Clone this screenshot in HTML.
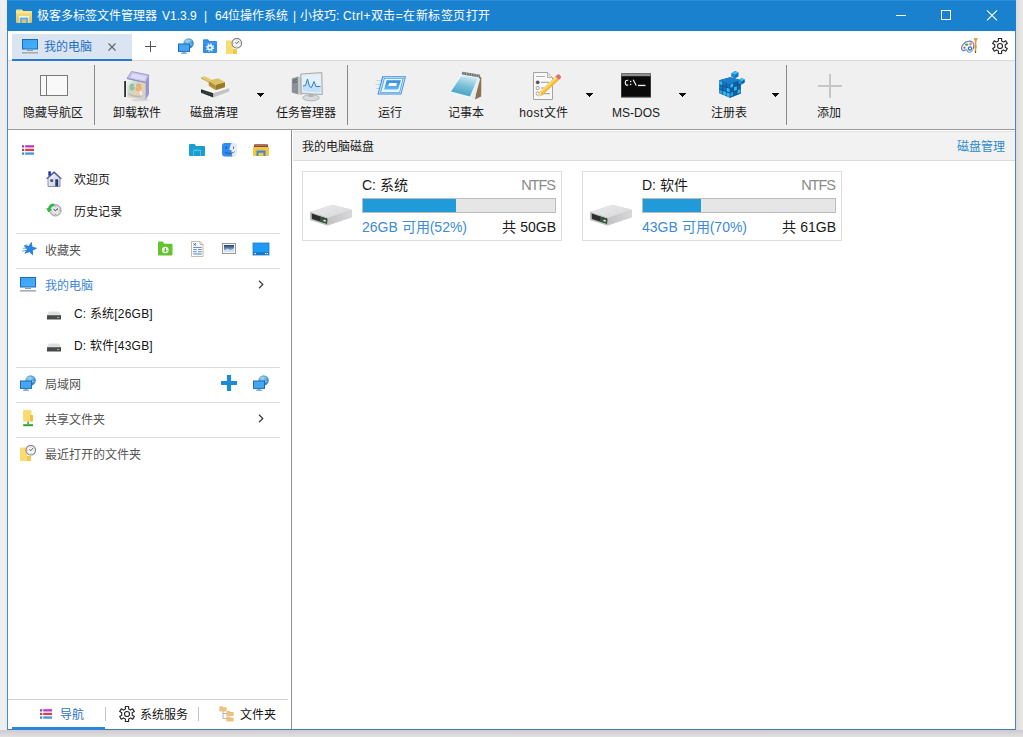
<!DOCTYPE html>
<html lang="zh-CN">
<head>
<meta charset="utf-8">
<title>极客多标签文件管理器</title>
<style>
*{box-sizing:border-box;margin:0;padding:0}
html,body{width:1023px;height:737px;overflow:hidden}
body{position:relative;background:#e9e9ec;font-family:"Liberation Sans",sans-serif;font-size:12px;color:#141414}
.abs{position:absolute}
#shL{left:0;top:0;width:7px;height:737px;background:linear-gradient(90deg,#e8edf6,#f5efec 50%,#e6edf8)}
#shR{left:1016px;top:0;width:7px;height:737px;background:linear-gradient(90deg,#dcdcde,#ece8e6)}
#shB{left:0;top:730px;width:1023px;height:7px;background:linear-gradient(180deg,#c6cad8,#dcd2d6 45%,#dde1de)}
#win{left:7px;top:0;width:1009px;height:730px;background:#fff;border-left:1px solid #4b8ad0;border-right:1px solid #4b86c2;border-bottom:1px solid #4a7ca6}
#title{left:7px;top:0;width:1009px;height:31px;background:#1a81ce;border-top:1px solid #2a8cd8;color:#fff}
#title span{position:absolute;top:0;height:31px;line-height:31px;white-space:nowrap;font-size:12px}
#tabrow{left:8px;top:31px;width:1007px;height:29px;background:#fff}
#tabline{left:8px;top:60px;width:1007px;height:1px;background:#dadada}
#tab{left:12px;top:34px;width:120px;height:25px;background:#dbe4f1}
#tabul{left:12px;top:59px;width:120px;height:2px;background:#2b78cc}
#tabtxt{left:44px;top:35px;height:24px;line-height:24px;color:#1c6fc4;white-space:nowrap}
#tool{left:8px;top:61px;width:1007px;height:68px;background:#f0f0f0}
#toolline{left:8px;top:129px;width:1007px;height:1px;background:#9a9a9a}
.tsep{position:absolute;top:65px;width:1px;height:60px;background:#8a8a8a}
.tlab{position:absolute;top:105px;height:16px;line-height:16px;width:80px;margin-left:-40px;text-align:center;white-space:nowrap;color:#1a1a1a}
.dd{position:absolute;top:93px;width:7px;height:4px}
#split{left:291px;top:130px;width:1px;height:599px;background:#909090}
#rhead{left:293px;top:131px;width:722px;height:29px;background:#f2f2f2;border-top:1px solid #e3e3e3}
#rheadline{left:293px;top:160px;width:722px;height:1px;background:#dcdcdc}
.hl{position:absolute;left:16px;width:264px;height:1px;background:#dcdcdc}
.nt{position:absolute;height:20px;line-height:20px;white-space:nowrap;margin-top:1px}
.g{color:#555}
.b{color:#3a86d8}
.card{position:absolute;top:171px;width:260px;height:70px;border:1px solid #dedede;background:#fff;font-size:14px}
.card .nm{position:absolute;left:59px;top:3px;height:20px;line-height:20px;white-space:nowrap;color:#1a1a1a}
.card .fs{position:absolute;right:6px;top:3px;height:20px;line-height:20px;color:#8a8a8a;font-size:14.5px;letter-spacing:-1px}
.card .bar{position:absolute;left:59px;top:26px;width:194px;height:15px;border:1px solid #bcbcbc;background:#e6e6e6}
.card .bar i{display:block;height:13px;background:#219ad9}
.card .fr{position:absolute;left:59px;top:45px;height:20px;line-height:20px;white-space:nowrap;color:#3d8bd6}
.card .tt{position:absolute;right:5px;top:45px;height:20px;line-height:20px;white-space:nowrap;color:#1a1a1a}
#btline{left:8px;top:699px;width:280px;height:1px;background:#cfcfcf}
#btul{left:12px;top:727px;width:93px;height:3px;background:#2b86d8}
.bsep{position:absolute;top:707px;width:1px;height:14px;background:#c4c4c4}
svg{position:absolute;overflow:visible}
</style>
</head>
<body>
<div class="abs" id="shL"></div><div class="abs" id="shR"></div><div class="abs" id="shB"></div>
<div class="abs" id="win"></div>

<!-- TITLE BAR -->
<div class="abs" id="title">
<span style="left:30px">极客多标签文件管理器</span>
<span style="left:155px">V1.3.9</span>
<span style="left:197px">|</span>
<span style="left:208px">64位操作系统</span>
<span style="left:286px">|</span>
<span style="left:293px">小技巧:</span>
<span style="left:336px;letter-spacing:.45px">Ctrl+双击=在新标签页打开</span>
</div>

<!-- TAB ROW -->
<div class="abs" id="tabrow"></div>
<div class="abs" id="tabline"></div>
<div class="abs" id="tab"></div>
<div class="abs" id="tabul"></div>
<div class="abs" id="tabtxt">我的电脑</div>

<!-- TOOLBAR -->
<div class="abs" id="tool"></div>
<div class="abs" id="toolline"></div>
<div class="tsep" style="left:94px"></div>
<div class="tsep" style="left:347px"></div>
<div class="tsep" style="left:786px"></div>
<div class="tlab" style="left:53px">隐藏导航区</div>
<div class="tlab" style="left:137px">卸载软件</div>
<div class="tlab" style="left:214px">磁盘清理</div>
<div class="tlab" style="left:306px">任务管理器</div>
<div class="tlab" style="left:390px">运行</div>
<div class="tlab" style="left:466px">记事本</div>
<div class="tlab" style="left:544px;letter-spacing:.5px">host文件</div>
<div class="tlab" style="left:636px">MS-DOS</div>
<div class="tlab" style="left:729px">注册表</div>
<div class="tlab" style="left:829px">添加</div>
<svg class="dd" style="left:257px" width="7" height="4" viewBox="0 0 7 4" shape-rendering="crispEdges"><path d="M0 0h7v1h-1v1h-1v1h-1v1h-1v-1h-1v-1h-1v-1h-1z" fill="#0c0c0c"/></svg>
<svg class="dd" style="left:586px" width="7" height="4" viewBox="0 0 7 4" shape-rendering="crispEdges"><path d="M0 0h7v1h-1v1h-1v1h-1v1h-1v-1h-1v-1h-1v-1h-1z" fill="#0c0c0c"/></svg>
<svg class="dd" style="left:679px" width="7" height="4" viewBox="0 0 7 4" shape-rendering="crispEdges"><path d="M0 0h7v1h-1v1h-1v1h-1v1h-1v-1h-1v-1h-1v-1h-1z" fill="#0c0c0c"/></svg>
<svg class="dd" style="left:772px" width="7" height="4" viewBox="0 0 7 4" shape-rendering="crispEdges"><path d="M0 0h7v1h-1v1h-1v1h-1v1h-1v-1h-1v-1h-1v-1h-1z" fill="#0c0c0c"/></svg>

<!-- PANELS -->
<div class="abs" id="split"></div>
<div class="abs" id="rhead"></div>
<div class="abs" id="rheadline"></div>
<div class="nt" style="left:302px;top:136px;color:#1a1a1a">我的电脑磁盘</div>
<div class="nt" style="left:957px;top:136px;color:#2d8bc9">磁盘管理</div>

<!-- LEFT NAV -->
<div class="nt" style="left:74px;top:169px">欢迎页</div>
<div class="nt" style="left:74px;top:201px">历史记录</div>
<div class="hl" style="top:233px"></div>
<div class="nt g" style="left:45px;top:240px">收藏夹</div>
<div class="hl" style="top:268px"></div>
<div class="nt b" style="left:45px;top:275px">我的电脑</div>
<div class="nt" style="left:74px;top:303px"><span style="letter-spacing:.2px">C: 系统[26GB]</span></div>
<div class="nt" style="left:74px;top:335px"><span style="letter-spacing:.2px">D: 软件[43GB]</span></div>
<div class="hl" style="top:367px"></div>
<div class="nt g" style="left:45px;top:374px">局域网</div>
<div class="hl" style="top:402px"></div>
<div class="nt g" style="left:45px;top:409px">共享文件夹</div>
<div class="hl" style="top:437px"></div>
<div class="nt g" style="left:45px;top:444px">最近打开的文件夹</div>

<!-- DRIVE CARDS -->
<div class="card" style="left:302px">
<div class="nm">C: 系统</div><div class="fs">NTFS</div>
<div class="bar"><i style="width:93px"></i></div>
<div class="fr">26GB 可用(52%)</div><div class="tt">共 50GB</div>
</div>
<div class="card" style="left:582px">
<div class="nm">D: 软件</div><div class="fs">NTFS</div>
<div class="bar"><i style="width:58px"></i></div>
<div class="fr">43GB 可用(70%)</div><div class="tt">共 61GB</div>
</div>

<!-- BOTTOM TABS -->
<div class="abs" id="btline"></div>
<div class="abs" id="btul"></div>
<div class="bsep" style="left:105px"></div>
<div class="bsep" style="left:198px"></div>
<div class="nt" style="left:60px;top:704px;color:#2b6fc2">导航</div>
<div class="nt" style="left:140px;top:704px">系统服务</div>
<div class="nt" style="left:240px;top:704px">文件夹</div>

<!-- ICONS -->
<svg width="0" height="0" style="left:0;top:0">
<defs>
<linearGradient id="gFold" x1="0" y1="0" x2="0" y2="1"><stop offset="0" stop-color="#f8e48e"/><stop offset="1" stop-color="#ecc044"/></linearGradient>
<linearGradient id="gScr" x1="0" y1="0" x2="1" y2="1"><stop offset="0" stop-color="#3aa2f4"/><stop offset="1" stop-color="#49b0fb"/></linearGradient>
<radialGradient id="gGlobe" cx="0.4" cy="0.35" r="0.7"><stop offset="0" stop-color="#9ad4f4"/><stop offset="1" stop-color="#2276b4"/></radialGradient>
<linearGradient id="gDrvTop" x1="0" y1="0" x2="1" y2="1"><stop offset="0" stop-color="#ececee"/><stop offset="1" stop-color="#d6d6d8"/></linearGradient><linearGradient id="gDrvSide" x1="0" y1="0" x2="1" y2="0"><stop offset="0" stop-color="#c2c2c4"/><stop offset="1" stop-color="#d8d8da"/></linearGradient>
<linearGradient id="gNote" x1="0" y1="0" x2="1" y2="1"><stop offset="0" stop-color="#9fd4e6"/><stop offset="0.5" stop-color="#4aa3c4"/><stop offset="1" stop-color="#8fcfe4"/></linearGradient>
<linearGradient id="gBox" x1="0" y1="0" x2="1" y2="1"><stop offset="0" stop-color="#fafafa"/><stop offset="0.35" stop-color="#c4dcc8"/><stop offset="0.6" stop-color="#ecd0b0"/><stop offset="1" stop-color="#c8d0e0"/></linearGradient>
<linearGradient id="gGold" x1="0" y1="0" x2="0" y2="1"><stop offset="0" stop-color="#d4b858"/><stop offset="1" stop-color="#987826"/></linearGradient>
<linearGradient id="gCube" x1="0" y1="0" x2="0" y2="1"><stop offset="0" stop-color="#3fb4ee"/><stop offset="1" stop-color="#1579c2"/></linearGradient>
<filter id="soft" x="-10%" y="-10%" width="120%" height="120%"><feGaussianBlur stdDeviation="0.35"/></filter>

<symbol id="iMon" viewBox="0 0 16 15"><rect x="0.5" y="0.5" width="15" height="9.5" fill="url(#gScr)" stroke="#1b6cb6"/><rect x="5" y="11" width="6" height="1" fill="#8f9ba8"/><rect x="0" y="13" width="16" height="1.6" fill="#a3adb8"/></symbol>
<symbol id="iNet" viewBox="0 0 16 16"><circle cx="10.6" cy="5.4" r="5.2" fill="url(#gGlobe)"/><path d="M7 3.5c2-1 4-1.5 6.5-.5M6.5 7c3-1 5.500-1 9 .2" stroke="#bfe4f8" stroke-width=".7" fill="none" opacity=".7"/><rect x="0.5" y="6" width="11" height="7.400" fill="#46a6f2" stroke="#1c6db8"/><rect x="4.500" y="13.800" width="3" height="1" fill="#5a92c6"/><rect x="3" y="14.800" width="6" height="1" fill="#6aa0d0"/></symbol>
<symbol id="iNoteClk" viewBox="0 0 16 16"><path d="M0 2.500h7v8.500h3.800v5H0z" fill="#f8dc70"/><path d="M7 11h3.800v5H7z" fill="#efc84c"/><circle cx="10.800" cy="5.200" r="4.800" fill="#f6f6f8" stroke="#85858c" stroke-width="1.100"/><path d="M10.800 1.600v1M10.800 7.800v1M7.200 5.200h1M13.400 5.200h1" stroke="#9a9aa0" stroke-width=".7"/><path d="M9.300 4.300l1.500 1.400 2.100-2.600" stroke="#4a4a50" stroke-width=".9" fill="none"/></symbol>
<symbol id="iList" viewBox="0 0 12 10"><rect x="0" y="0.200" width="2.200" height="2.300" fill="#8a46b8"/><rect x="3.200" y="0.200" width="8.800" height="2.300" fill="#b53cc2"/><rect x="0" y="3.800" width="2.200" height="2.300" fill="#b8474a"/><rect x="3.200" y="3.800" width="8.800" height="2.300" fill="#d6404c"/><rect x="0" y="7.400" width="2.200" height="2.300" fill="#3c86c8"/><rect x="3.200" y="7.400" width="8.800" height="2.300" fill="#3e97dc"/></symbol>
<symbol id="iGear" viewBox="0 0 16 16"><path d="M6.42 2.94 L6.40 0.47 L9.60 0.47 L9.58 2.94 A5.30 5.30 0 0 1 11.59 4.10 L13.72 2.85 L15.32 5.62 L13.17 6.84 A5.30 5.30 0 0 1 13.17 9.16 L15.32 10.38 L13.72 13.15 L11.59 11.90 A5.30 5.30 0 0 1 9.58 13.06 L9.60 15.53 L6.40 15.53 L6.42 13.06 A5.30 5.30 0 0 1 4.41 11.90 L2.28 13.15 L0.68 10.38 L2.83 9.16 A5.30 5.30 0 0 1 2.83 6.84 L0.68 5.62 L2.28 2.85 L4.41 4.10 A5.30 5.30 0 0 1 6.42 2.94 Z" fill="none" stroke="#2a2a2a" stroke-width="1.150" stroke-linejoin="round"/><circle cx="8" cy="8" r="2.500" fill="none" stroke="#2a2a2a" stroke-width="1.150"/></symbol>
<symbol id="iDrvS" viewBox="0 0 14 9"><path d="M2 0.500h10l2 3.500H0z" fill="#dedfe0"/><rect x="0" y="4" width="14" height="4.600" rx=".6" fill="#45494b"/><rect x="0" y="4" width="14" height="1" fill="#6a6e70"/><rect x="10.300" y="6" width="2" height="1" fill="#7fd05a"/></symbol>
<symbol id="iDrvL" viewBox="0 0 43 22"><path d="M0 7.900 L22.500 0.800 L41.600 5.700 L41.900 13.300 L17.500 21.600 L0.300 16.100Z" fill="#c9c9cb"/><path d="M0 7.900 L22.500 0.800 L41.600 5.700 L18.100 13.900Z" fill="url(#gDrvTop)"/><path d="M18.100 13.900 L41.600 5.700 L41.900 13.300 L17.500 21.600Z" fill="url(#gDrvSide)"/><path d="M0 7.900 L18.100 13.900 L17.500 21.600 L0.300 16.100Z" fill="#bcbcbe"/><path d="M1.700 9.600 L17.300 14.800 L17 19.800 L1.900 15.100Z" fill="#2c2d2f"/><path d="M10 12.400 L17.300 14.800 L17 19.800 L10 17.600Z" fill="#35553a"/><ellipse cx="14.700" cy="16.700" rx="1.500" ry=".8" fill="#e4f4e0" transform="rotate(17 14.700 16.700)"/></symbol>
<symbol id="iChev" viewBox="0 0 6 9"><path d="M1 0.700 L4.800 4.500 L1 8.300" fill="none" stroke="#444" stroke-width="1.300"/></symbol>
</defs>
</svg>

<!-- title icon -->
<svg style="left:16px;top:9px" width="16" height="14" viewBox="0 0 16 14"><path d="M0 1.500q0-1 1-1h5l1.200 1.500H15q1 0 1 1V13q0 1-1 1H1q-1 0-1-1z" fill="url(#gFold)"/><rect x="0" y="2.600" width="16" height="1.200" fill="#fbeeb0" opacity=".8"/><path d="M3 7h10v7H3z" fill="#e9f3fb"/><path d="M3.800 8.600h8.400V14H3.800z" fill="#5fb0ea"/><path d="M6 10.500h4V14H6z" fill="#e6c652"/></svg>
<!-- window controls -->
<svg style="left:896px;top:10px" width="102" height="11" viewBox="0 0 102 11"><path d="M0 5.500h10" stroke="#fff" stroke-width="1"/><rect x="45.500" y="0.500" width="9" height="9" fill="none" stroke="#fff" stroke-width="1"/><path d="M91 0.300 L101 10.300 M101 0.300 L91 10.300" stroke="#fff" stroke-width="1.100"/></svg>

<!-- tab icons -->
<svg style="left:22px;top:39px" width="16" height="15"><use href="#iMon"/></svg>
<svg style="left:108px;top:43px" width="8" height="8" viewBox="0 0 8 8"><path d="M0.500 0.500 L7.500 7.500 M7.500 0.500 L0.500 7.500" stroke="#666" stroke-width="1.200"/></svg>
<svg style="left:145px;top:41px" width="11" height="11" viewBox="0 0 11 11"><path d="M5.500 0v11M0 5.500h11" stroke="#555" stroke-width="1"/></svg>
<svg style="left:178px;top:38px" width="16" height="16"><use href="#iNet"/></svg>
<svg style="left:203px;top:39px" width="14" height="14" viewBox="0 0 14 14"><path d="M0 1.200q0-1 1-1h4l1.300 1.800H13q1 0 1 1V13q0 1-1 1H1q-1 0-1-1z" fill="#2f8cec"/><path d="M0 3.500h14v1H0z" fill="#5aa8f4" opacity=".6"/><circle cx="7" cy="8.600" r="3" fill="#eaf4fe"/><circle cx="7" cy="8.600" r="3.600" fill="none" stroke="#eaf4fe" stroke-width="1.300" stroke-dasharray="1.400 1.420"/><circle cx="7" cy="8.600" r="1.200" fill="#2f8cec"/></svg>
<svg style="left:226px;top:38px" width="16" height="16"><use href="#iNoteClk"/></svg>
<!-- palette -->
<svg style="left:961px;top:37px" width="18" height="17" viewBox="0 0 18 17"><path d="M7.500 4.200c3.600-.4 5.600 1.500 5.400 4.600-.2 3.300-2.400 6.600-4.900 6.400-1.800-.2-1.400-2.300-2.600-2.500-1.600-.2-2.800 2-4 .6C.3 11.800.5 9 2.500 6.800 3.800 5.300 5.500 4.400 7.500 4.200z" fill="#eef6fd" stroke="#5a7ab8" stroke-width="1.100"/><path d="M8 10.500c2 .2 3.500 1 4 2.200-.8 1.600-2.500 2.700-4 2.500-1.500-.3-1.200-2-2-2.500.5-1 1-2 2-2.200z" fill="#bfe6f8" opacity=".8"/><ellipse cx="5.600" cy="7.600" rx="1.700" ry="1.200" fill="#46b046"/><ellipse cx="9.500" cy="7" rx="1.300" ry="1.400" fill="#e0905a"/><ellipse cx="3.400" cy="10.800" rx="1.100" ry="1" fill="#c0504a"/><circle cx="9" cy="11.500" r="1.600" fill="#fff" stroke="#3a68b4" stroke-width="1.100"/><path d="M12.800 1.200h4l-1.300 2.600-.2 3.200q1.100 2.800-.1 5.600l-.2 3.200h-1l-.2-3.200q-1-2.800.1-5.600l-.2-3.200z" fill="#e49a30"/><path d="M12.800 1.200h4l-1.300 2.800h-1.400z" fill="#dc9a64"/><rect x="13.900" y="14" width="1.200" height="1.900" fill="#7a4a20"/></svg>
<svg style="left:992px;top:38px" width="16" height="16"><use href="#iGear"/></svg>
<!-- TOOLBAR ICONS -->
<!-- hide nav -->
<svg style="left:40px;top:75px" width="28" height="21" viewBox="0 0 28 21"><rect x="0.500" y="0.500" width="27" height="20" fill="#f9f9f9" stroke="#7a7a7a"/><path d="M6.500 0.500v20" stroke="#7a7a7a"/></svg>
<!-- uninstall software box -->
<svg style="left:123px;top:70px" width="28" height="32" viewBox="0 0 28 32"><g filter="url(#soft)"><ellipse cx="17" cy="30" rx="9" ry="1.500" fill="#d0d0d0" opacity=".7"/><rect x="1.200" y="11" width="1.800" height="16" fill="#2d2d33"/><path d="M4 8.500 L22.500 12.500 L22.500 30.200 L4.500 27Z" fill="url(#gBox)"/><path d="M22.500 12.500 L26 5 L26 24 L22.500 30.200Z" fill="#9a96c8"/><path d="M4 8.500 L8.500 1.500 L26 5 L22.500 12.500Z" fill="#c6c2ee" stroke="#9490cc" stroke-width=".8"/><path d="M7.500 7.600 L9.800 3.600 L23.300 6.300 L21.300 10.400Z" fill="#dddbf8"/><path d="M4 8.500 L22.500 12.500" stroke="#8c88c4" stroke-width=".9"/><path d="M8 18c3-3 6-2 8 1s2 5 3 8" stroke="#fff" stroke-width="2" fill="none" opacity=".7"/><ellipse cx="15.500" cy="17.500" rx="3" ry="4" fill="#e6a868" opacity=".8"/><ellipse cx="9" cy="17" rx="2.600" ry="3.500" fill="#86b894" opacity=".8"/><path d="M6 24c3 2 8 3 14 2" stroke="#9ab0c8" stroke-width="1.500" fill="none" opacity=".7"/></g></svg>
<!-- disk cleanup -->
<svg style="left:199px;top:74px" width="32" height="25" viewBox="0 0 32 25"><g filter="url(#soft)"><path d="M2 15.200 L16 10 L30.200 14 L14.400 19.300Z" fill="#f6f6f6"/><path d="M2 15.200 L14.400 19.300 L14.400 23.400 L2 18.700Z" fill="#26282a"/><path d="M3.200 16.700 L13.200 20 L13.200 21.700 L3.200 18.200Z" fill="#324c38"/><path d="M14.400 19.300 L30.200 14 L30.200 17.600 L14.400 23.400Z" fill="#c2c4c6"/><path d="M9.700 6.500 L16.500 10.800 L16.500 16.200 L9.700 11.700Z" fill="#b89a3e"/><path d="M16.500 10.800 L26 8 L26 13.300 L16.500 16.200Z" fill="#9c7c2a"/><path d="M9.700 6.500 L19 4.200 L26 8 L16.500 10.800Z" fill="#dcc264"/><path d="M9.700 9 L16.500 13.400 L26 10.600" stroke="#8a6c20" stroke-width=".6" fill="none" opacity=".7"/><path d="M2 3.300 L6 2.200 L12.500 5.800 L9.700 7.400Z" fill="#e4cc6c"/><path d="M2 3.300 L9.700 7.400 L9.700 8.600 L2 4.600Z" fill="#c0a448"/></g></svg>
<!-- task manager -->
<svg style="left:291px;top:72px" width="32" height="30" viewBox="0 0 32 30"><g filter="url(#soft)"><path d="M0.800 6.500 L7.500 4.500 L7.500 22.500 L0.800 20.500Z" fill="#8c9094"/><path d="M7.500 4.500 L11 5.500 L11 23 L7.500 22.500Z" fill="#c6c9cc"/><path d="M2 8.500 L6 7.500 M2 10.500 L6 9.700" stroke="#50555a" stroke-width=".8"/><ellipse cx="20" cy="25.800" rx="8.300" ry="3" fill="#d8dadc" stroke="#a8aaac" stroke-width=".8"/><rect x="17.500" y="21" width="5" height="4" fill="#b4b6b8"/><path d="M9.800 2 L30.800 0.600 L31.300 22.500 L10.300 21.500Z" fill="#e8eaec" stroke="#9c9fa2" stroke-width=".9"/><path d="M11.800 4.200 L29.200 3.100 L29.600 20.300 L12.200 19.500Z" fill="#e2f1fc"/><path d="M12 14 L14.500 13.500 L16.500 7 L18.500 14.500 L20.500 15.500 L23 9.500 L25 14.500 L29.500 14.500 L29.600 20.300 L12.200 19.500Z" fill="#bfe0f8"/><path d="M12 14 L14.500 13.500 L16.500 7 L18.500 14.500 L20.500 15.500 L23 9.500 L25 14.500 L29.500 14.500" fill="none" stroke="#2f7fc4" stroke-width="1"/></g></svg>
<!-- run -->
<svg style="left:375px;top:74px" width="33" height="23" viewBox="0 0 33 23"><defs><linearGradient id="gRun" x1="0" y1="0" x2="0" y2="1"><stop offset="0" stop-color="#3c8ad8"/><stop offset="1" stop-color="#6ab6f2"/></linearGradient></defs><g filter="url(#soft)"><path d="M1.500 6.500h5M0.500 10.500h4.500M1 14.500h3" stroke="#b4d8f6" stroke-width="1.200"/><path d="M7.200 2.300 L31 2.300 L26.400 20.500 L2.400 20.500Z" fill="#3f90de"/><path d="M8.200 3.200 L29.800 3.200 L25.700 19.600 L3.700 19.600Z" fill="#cbe8fc"/><path d="M9 4 L28.700 4 L25 18.800 L5 18.800Z" fill="#56a4e8"/><path d="M9.800 4.800 L27.600 4.800 L24.300 18 L6.200 18Z" fill="#e6f7ff"/><path d="M11.600 6.200 L25.900 6.200 L23.100 15.500 L9.100 15.500Z" fill="url(#gRun)"/><path d="M14.200 9 L22 9 L21.300 12 L13.200 12Z" fill="#f2fbff"/></g></svg>
<!-- notepad -->
<svg style="left:449px;top:71px" width="33" height="30" viewBox="0 0 33 30"><defs><linearGradient id="gNote2" x1="0.600" y1="0" x2="0.300" y2="1"><stop offset="0" stop-color="#cde8f2"/><stop offset=".45" stop-color="#7cc0da"/><stop offset="1" stop-color="#3d9cc2"/></linearGradient></defs><g filter="url(#soft)"><path d="M30 5 L32.300 6.500 L32.200 25.500 L26 28.500Z" fill="#8a7250"/><path d="M29 6.500 L31.200 8 L25.500 28.600 L22 27.500Z" fill="#e4ecf0"/><path d="M11.500 3.800 L30 6 L22 27.500 L0.600 21.500Z" fill="#f0f7fa"/><path d="M12.300 5 L28.800 7 L21 25.600 L2 20.600Z" fill="url(#gNote2)"/><path d="M13.400 0.800 L31.300 3.800 L30.800 6.400 L12.800 3.600Z" fill="#6c7276"/><path d="M15 1.200v2.500M17.500 1.600v2.500M20 2v2.500M22.500 2.400v2.500M25 2.800v2.500M27.500 3.200v2.500M29.800 3.600v2.500" stroke="#b8bcc0" stroke-width=".7"/></g></svg>
<!-- host file -->
<svg style="left:532px;top:71px" width="30" height="30" viewBox="0 0 30 30"><g filter="url(#soft)"><path d="M1.500 1.500h14l5 5V28.500h-19z" fill="#f8f8f8" stroke="#a3a3a3" stroke-width="1"/><path d="M15.500 1.500v5h5" fill="#e4e4e4" stroke="#a3a3a3" stroke-width=".8"/><path d="M4 5.500h9" stroke="#b0b0b0" stroke-width="1"/><circle cx="5.700" cy="11.300" r="1.900" fill="#5a5a5a"/><circle cx="5.700" cy="17" r="1.600" fill="#fff" stroke="#8a8a8a" stroke-width=".8"/><circle cx="5.700" cy="22.700" r="1.600" fill="#fff" stroke="#8a8a8a" stroke-width=".8"/><path d="M9 11.300h8M9 17h5M9 22.700h9" stroke="#9a9a9a" stroke-width="1"/><path d="M23.500 5.500 L27 9 L10 24.500 L6 25.500 L7 21.500Z" fill="#f4b93a"/><path d="M23.500 5.500 L25.300 7.200 L8.200 23.200 L7 21.500Z" fill="#f8d870"/><path d="M23.500 5.500 L25.600 3.600 Q26.500 2.900 27.400 3.800 L28.800 5.200 Q29.500 6.100 28.800 6.900 L27 9Z" fill="#e66a6a"/><path d="M6 25.500 L7 21.500 L10 24.500Z" fill="#f0d8b0"/></g></svg>
<!-- ms-dos -->
<svg style="left:621px;top:73px" width="30" height="25" viewBox="0 0 30 25"><rect x="0" y="0" width="30" height="24.400" fill="#0a0a0a"/><rect x="0" y="0" width="30" height="3.200" fill="#8e8e8e"/><rect x="0.500" y="0.500" width="29" height="23.400" fill="none" stroke="#5a5a5a" stroke-width="1" opacity=".6"/><path d="M7.200 7.300 Q4.300 6.800 4.300 9.700 Q4.300 12.600 7.200 12.100" fill="none" stroke="#f4f4f4" stroke-width="1.200"/><rect x="9" y="7.800" width="1.300" height="1.300" fill="#f4f4f4"/><rect x="9" y="10.800" width="1.300" height="1.300" fill="#f4f4f4"/><path d="M12.200 6.700 L15.200 12.500" stroke="#f4f4f4" stroke-width="1.200"/><rect x="17" y="11.800" width="7.500" height="1.300" fill="#f4f4f4"/></svg>
<!-- registry -->
<svg style="left:718px;top:69px" width="28" height="30" viewBox="0 0 28 30"><g filter="url(#soft)"><path d="M1.100 11.200 L12 8.200 L22.800 11 L22.800 24.500 L12 28.700 L1.100 24.200Z" fill="#1573ba"/><path d="M1.100 11.200 L12 8.200 L22.800 11 L12 15Z" fill="#1a7fc8"/><path d="M12 15 L22.800 11 L22.800 24.500 L12 28.700Z" fill="#0f62a4"/><path d="M4.700 12.600v13M8.300 13.800v13.400M12 15v13.700M15.600 13.600v13.600M19.200 12.300v13.600M1.100 15.500l10.900 4 10.800-4.200M1.100 19.900l10.900 4.200 10.800-4.300" stroke="#0a4f8c" stroke-width=".8" fill="none" opacity=".9"/><path d="M1.500 12 L4.300 13 L4.300 16.300 L1.500 15.300Z M5.100 21.900 L7.900 22.900 L7.900 26.300 L5.100 25.200Z M8.700 18.700 L11.600 19.700 L11.600 23.200 L8.700 22.100Z M12.400 15.400 L15.200 14.300 L15.200 17.800 L12.400 19Z M16 18.300 L18.800 17.200 L18.800 20.700 L16 21.900Z M8.700 27 L11.600 28 L11.600 24.500 L8.700 23.400Z M19.600 21.200 L22.400 20.100 L22.400 23.600 L19.600 24.800Z" fill="#3cc0f4" opacity=".9"/><path d="M12.400 23.800 L15.200 22.700 L15.200 26.200 L12.400 27.400Z M1.500 20.700 L4.300 21.700 L4.300 24.700 L1.500 23.700Z" fill="#2aa4e4" opacity=".9"/><path d="M13.500 4.200 L17 2 L20.500 3.600 L20.500 7.300 L17.200 9.500 L13.500 7.800Z" fill="#1573ba"/><path d="M13.500 4.200 L17 2 L20.500 3.600 L17.200 5.800Z" fill="#3cc0f4"/><path d="M13.500 4.200 L17.200 5.800 L17.200 9.500 L13.500 7.800Z" fill="#1e8cd4"/><path d="M20.500 11 L23.600 9 L26.800 10.400 L26.800 13.600 L23.800 15.500 L20.500 14.200Z" fill="#0f62a4"/><path d="M20.500 11 L23.600 9 L26.800 10.400 L23.800 12.300Z" fill="#3cc0f4"/><path d="M20.500 11 L23.800 12.300 L23.800 15.500 L20.500 14.200Z" fill="#1e8cd4"/></g></svg>
<!-- add -->
<svg style="left:818px;top:74px" width="24" height="24" viewBox="0 0 24 24"><path d="M12 0v24M0 12h24" stroke="#c6c6c6" stroke-width="2"/></svg>
<!-- LEFT PANEL ICONS -->
<svg style="left:22px;top:145px" width="12" height="10"><use href="#iList"/></svg>
<!-- teal folder -->
<svg style="left:189px;top:144px" width="16" height="12" viewBox="0 0 16 12"><path d="M0 1q0-1 1-1h4.500l1.500 2H15q1 0 1 1V11q0 1-1 1H1q-1 0-1-1z" fill="#189fd2"/><path d="M4 5.500h8V12H4z" fill="#64c4ea" opacity=".75"/><path d="M5 7.200h6V12H5z" fill="#189fd2"/></svg>
<!-- finder -->
<svg style="left:222px;top:143px" width="15" height="14" viewBox="0 0 15 14"><rect x="0" y="0" width="15" height="13.600" rx="3" fill="#e6ecf4"/><path d="M3 0h6.500c-1.500 3-2 5-2 7h2c0 2.500.3 4.500 1 6.600H3q-3 0-3-3V3q0-3 3-3z" fill="#2e8cf2"/><rect x="3.800" y="3.500" width="1" height="2.400" fill="#0f4f9c"/><rect x="11" y="3.500" width="1" height="2.400" fill="#66707e"/><path d="M3 9c2.500 2 6.500 2 9.500-.3" stroke="#3a4a64" stroke-width=".8" fill="none"/></svg>
<!-- explorer -->
<svg style="left:253px;top:144px" width="16" height="12" viewBox="0 0 16 12"><path d="M1 2.500h14q1 0 1 1V11q0 1-1 1H1q-1 0-1-1V3.500q0-1 1-1z" fill="#f5c53c"/><path d="M2 0.300h12q1 0 1 1V3H1V1.300q0-1 1-1z" fill="#7a4a52"/><path d="M2 1h12v1H2z" fill="#c86a3a"/><path d="M3.500 6.500h9V12h-9z" fill="#3b8ade"/><path d="M5.500 8.700h5V12h-5z" fill="#f5c53c"/></svg>
<!-- house -->
<svg style="left:46px;top:171px" width="16" height="16" viewBox="0 0 16 16"><defs><linearGradient id="gHouse" x1="0" y1="0" x2="1" y2="1"><stop offset="0" stop-color="#f4f6fa"/><stop offset="1" stop-color="#c4ccd8"/></linearGradient></defs><rect x="2.300" y="0.300" width="2.600" height="4.500" fill="#2438b0"/><path d="M2 7.200 L8 1.800 L14 7.200 V15.500 H2Z" fill="url(#gHouse)" stroke="#808aa0" stroke-width=".9"/><path d="M0.600 7.900 L8 1 L15.400 7.900" fill="none" stroke="#3d4d92" stroke-width="1.100" stroke-linejoin="round"/><rect x="4.300" y="8.300" width="2.800" height="2.600" fill="#4a5468"/><rect x="9.300" y="8.300" width="2.800" height="7" fill="#223e7a"/></svg>
<!-- history -->
<svg style="left:46px;top:203px" width="16" height="15" viewBox="0 0 16 15"><circle cx="9.400" cy="7.300" r="5.700" fill="#d2d4d8" stroke="#9c9ea4" stroke-width="1"/><circle cx="9.400" cy="7.300" r="3.900" fill="#e4e6e8"/><path d="M9.400 2.600v1.200M9.400 10.800v1.200M4.700 7.300h1.200M12.900 7.300h1.200" stroke="#8a8c92" stroke-width=".7"/><path d="M7.600 6.300 L9.400 7.600 L12 5.600" stroke="#3a3c42" stroke-width="1" fill="none"/><path d="M8.200 1.700 Q4 1.800 3 6" stroke="#2db83e" stroke-width="2.400" fill="none"/><path d="M0.200 5 L5.800 5.900 L2.400 9.600Z" fill="#2db83e"/></svg>
<!-- star -->
<svg style="left:22px;top:242px" width="15" height="13" viewBox="0 0 15 13"><path d="M9.35 0.54 L10.08 5.03 L14.46 6.22 L10.42 8.30 L10.64 12.84 L7.42 9.64 L3.17 11.25 L5.22 7.19 L2.37 3.65 L6.86 4.34Z" fill="#2488ea" stroke="#1a66b8" stroke-width=".7"/><path d="M2.600 3.400 L5.600 3 M1 6.300 L4.300 6 M0.300 9.200 L4 8.400" stroke="#3f98ea" stroke-width=".9"/></svg>
<!-- green folder -->
<svg style="left:158px;top:241px" width="15" height="15" viewBox="0 0 15 15"><path d="M0 1.500q0-1 1-1h3.800l1.600 2.300H13.500q1 0 1 1V13.500q0 1-1 1H1q-1 0-1-1z" fill="#62c42e"/><circle cx="7.300" cy="9" r="3.300" fill="#f4fbef"/><path d="M7.300 7v3.600M5.800 9.400l1.500 1.500 1.500-1.500" stroke="#4eaa1e" stroke-width="1" fill="none"/></svg>
<!-- doc -->
<svg style="left:191px;top:241px" width="13" height="16" viewBox="0 0 13 16"><path d="M0.500 0.500h8.500l3 3V15.500H0.500z" fill="#fdfdfd" stroke="#bfb2a4" stroke-width=".9"/><path d="M9 0.500v3h3" fill="none" stroke="#b9a48a" stroke-width=".8"/><path d="M2.500 4.300l2.500-2M2.500 2.500l2.500 2" stroke="#2a5fb0" stroke-width=".9"/><path d="M2.200 6.400h8.500M2.200 8.600h3.500M7 8.600h3.700M2.200 10.800h3.500M7 10.800h3.700M2.200 13h8.500" stroke="#346fbc" stroke-width=".85"/></svg>
<!-- picture -->
<svg style="left:222px;top:243px" width="14" height="11" viewBox="0 0 14 11"><defs><linearGradient id="gPic" x1="0" y1="0" x2="0" y2="1"><stop offset="0" stop-color="#27446c"/><stop offset=".55" stop-color="#6f93bc"/><stop offset="1" stop-color="#c4d4e4"/></linearGradient></defs><rect x="0.500" y="0.500" width="13" height="10" fill="#f4f4f4" stroke="#8e8e8e" stroke-width=".9"/><rect x="2" y="2" width="10" height="7" fill="url(#gPic)"/><path d="M2 7.500 L5.500 5.500 L8.500 7 L12 5.300 V9 H2Z" fill="#dfe7ef" opacity=".8"/></svg>
<!-- desktop -->
<svg style="left:253px;top:243px" width="16" height="12" viewBox="0 0 16 12"><rect x="0" y="0" width="16" height="12" fill="#1d9bf2"/><rect x="0" y="0" width="16" height="12" fill="none" stroke="#1b7fd0" stroke-width=".8"/><rect x="0" y="9.200" width="16" height="2.800" fill="#1479cc"/><rect x="1.500" y="10" width="1.400" height="1.200" fill="#fff"/><rect x="12" y="10" width="1.200" height="1.200" fill="#fff"/><rect x="13.800" y="10" width="1.200" height="1.200" fill="#fff"/></svg>
<!-- my computer -->
<svg style="left:20px;top:277px" width="16" height="15"><use href="#iMon"/></svg>
<svg style="left:258px;top:280px" width="6" height="9"><use href="#iChev"/></svg>
<svg style="left:258px;top:414px" width="6" height="9"><use href="#iChev"/></svg>
<svg style="left:47px;top:311px" width="14" height="9"><use href="#iDrvS"/></svg>
<svg style="left:47px;top:343px" width="14" height="9"><use href="#iDrvS"/></svg>
<!-- network -->
<svg style="left:20px;top:375px" width="16" height="16"><use href="#iNet"/></svg>
<svg style="left:253px;top:375px" width="16" height="16"><use href="#iNet"/></svg>
<svg style="left:221px;top:375px" width="16" height="16" viewBox="0 0 16 16"><path d="M8 0v16M0 8h16" stroke="#1f8ad4" stroke-width="4.200"/></svg>
<!-- share folder -->
<svg style="left:22px;top:410px" width="12" height="17" viewBox="0 0 12 17"><path d="M1 1q0-1 1-1h6.500q1 0 1 1V5l1.500 1.200V10.500q0 1-1 1H2q-1 0-1-1z" fill="#f8dc72"/><path d="M8 5h3v5.500q0 1-1 1H8z" fill="#ecc24a"/><rect x="5.300" y="11.500" width="1.600" height="2.700" fill="#3aa83a"/><rect x="1.200" y="14.200" width="9.800" height="2" fill="#34a034"/></svg>
<!-- recent -->
<svg style="left:20px;top:445px" width="16" height="16"><use href="#iNoteClk"/></svg>

<!-- DRIVE CARD ICONS -->
<svg style="left:310px;top:204px" width="43" height="22" filter="url(#soft)"><use href="#iDrvL"/></svg>
<svg style="left:590px;top:204px" width="43" height="22" filter="url(#soft)"><use href="#iDrvL"/></svg>

<!-- BOTTOM TAB ICONS -->
<svg style="left:40px;top:709px" width="12" height="10"><use href="#iList"/></svg>
<svg style="left:119px;top:706px" width="16" height="16"><use href="#iGear"/></svg>
<svg style="left:219px;top:706px" width="15" height="16" viewBox="0 0 15 16"><path d="M4 3v9.500h4M4 7.500h4" stroke="#aab4c0" stroke-width="1" fill="none"/><path d="M0.300 1q0-.7.700-.7h2.500l.8 1H7q.7 0 .7.700V4.800q0 .7-.7.700H1q-.7 0-.7-.7z" fill="#eec27e"/><path d="M7.300 5.700q0-.7.700-.7h2.500l.8 1H14q.7 0 .7.700V9.300q0 .7-.7.700H8q-.7 0-.7-.7z" fill="#eec27e"/><path d="M7.300 11.200q0-.7.700-.7h2.500l.8 1H14q.7 0 .7.700V14.800q0 .7-.7.700H8q-.7 0-.7-.7z" fill="#eec27e"/></svg>

</body>
</html>
